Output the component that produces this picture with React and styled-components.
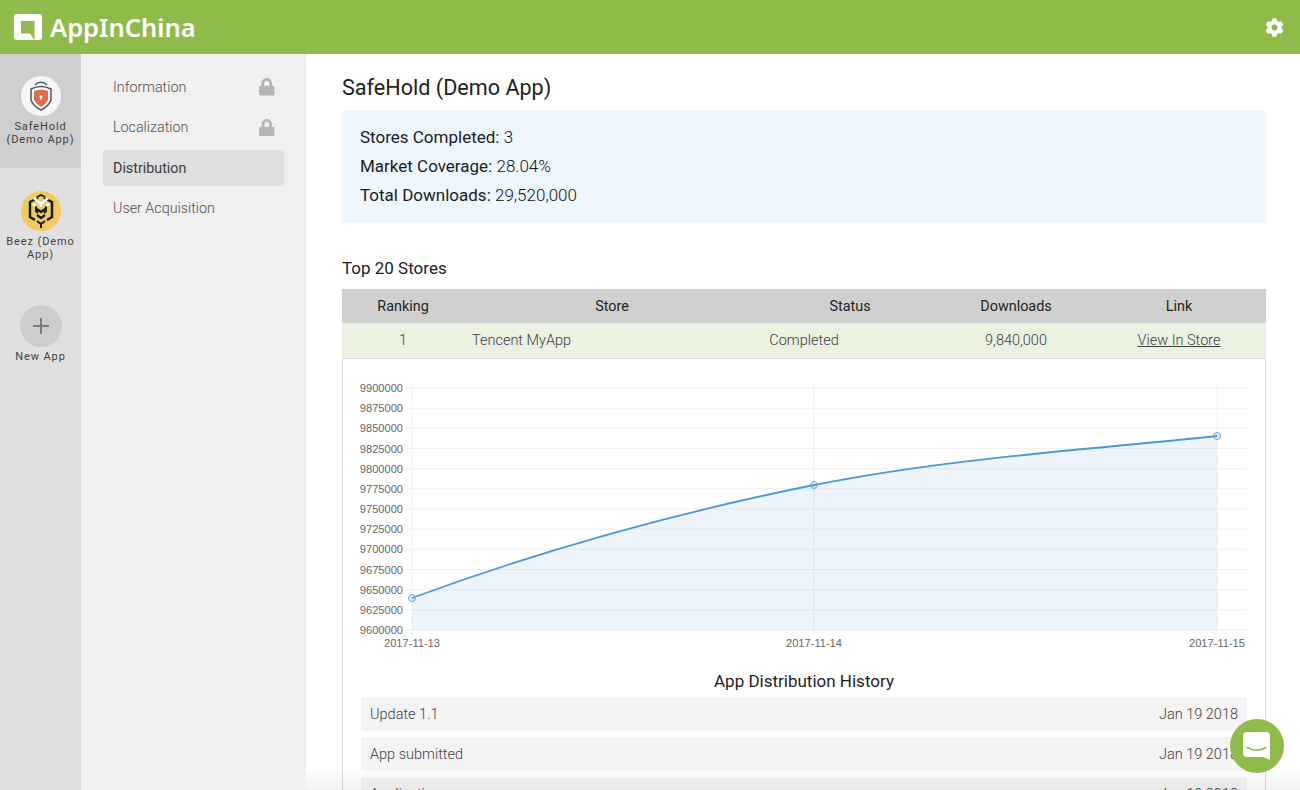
import React from 'react';
import styled, { createGlobalStyle } from 'styled-components';
import { FaCog, FaLock } from 'react-icons/fa';

const GlobalStyle = createGlobalStyle`
    html, body {
        margin: 0;
        height: 100%;
        overflow: hidden;
        background: #ffffff;
        font-family: Roboto, "Liberation Sans", sans-serif;
    }
`;

const Page = styled.div`
    display: flex;
    flex-direction: column;
    height: 790px;
    overflow: hidden;
    position: relative;
`;

const Header = styled.header`
    flex: 0 0 54px;
    display: flex;
    align-items: center;
    justify-content: space-between;
    padding: 0 16px 0 14px;
    background-color: #8fbb4b;
    color: #ffffff;
`;

const Brand = styled.div`
    display: flex;
    align-items: center;
    gap: 8px;
`;

const BrandName = styled.span`
    font-family: "Noto Sans", sans-serif;
    font-weight: 600;
    font-size: 25.5px;
    line-height: 54px;
`;

const Body = styled.div`
    flex: 1;
    display: flex;
    min-height: 0;
`;

const Rail = styled.nav`
    flex: 0 0 81px;
    background-color: #e1dfdf;
    display: flex;
    flex-direction: column;
`;

const RailItem = styled.div`
    flex: 0 0 ${(p) => p.$height}px;
    padding-top: ${(p) => p.$top}px;
    box-sizing: border-box;
    background-color: ${(p) => (p.$active ? '#cfcfcf' : 'transparent')};
    display: flex;
    flex-direction: column;
    align-items: center;
`;

const AppCircle = styled.div`
    flex: 0 0 40px;
    width: 40px;
    border-radius: 50%;
    background-color: ${(p) => p.$bg};
    display: flex;
    align-items: center;
    justify-content: center;
`;

const AddCircle = styled.div`
    flex: 0 0 42px;
    width: 42px;
    border-radius: 50%;
    background-color: #cdcdcd;
    display: flex;
    align-items: center;
    justify-content: center;
`;

const RailLabel = styled.div`
    margin-top: ${(p) => p.$gap}px;
    width: 78px;
    font-size: 11px;
    line-height: 12.6px;
    letter-spacing: 0.9px;
    color: #3f3f3f;
    text-align: center;
`;

const SideNav = styled.nav`
    flex: 0 0 225px;
    box-sizing: border-box;
    background-color: #f0f0f0;
    padding: 15px 22px;
    display: flex;
    flex-direction: column;
    gap: 4.33px;
`;

const NavItem = styled.div`
    height: 36px;
    display: flex;
    align-items: center;
    justify-content: space-between;
    padding: 0 9px 0 10px;
    border-radius: 4px;
    font-size: 14.3px;
    font-weight: ${(p) => (p.$active ? 400 : 300)};
    color: ${(p) => (p.$active ? '#3a3a3a' : '#4f4f4f')};
    background-color: ${(p) => (p.$active ? '#e0dfdf' : 'transparent')};
    svg {
        color: #b4b4b4;
        font-size: 17.5px;
    }
`;

const Main = styled.main`
    flex: 1;
    min-width: 0;
    padding: 20px 34px 0 36px;
    overflow: hidden;
`;

const Title = styled.h1`
    margin: 0 0 8px;
    font-size: 21.6px;
    line-height: 28px;
    font-weight: 400;
    color: #222222;
`;

const InfoBox = styled.div`
    box-sizing: border-box;
    height: 113px;
    padding: 13px 18px;
    background-color: #eef6fe;
    border-radius: 2px;
`;

const InfoLine = styled.div`
    font-size: 17px;
    line-height: 29px;
    color: #1c1c1c;
    span {
        font-weight: 300;
        color: #111111;
    }
`;

const SectionTitle = styled.h2`
    margin: 35px 0 11px;
    font-size: 17px;
    line-height: 20px;
    font-weight: 400;
    color: #222222;
`;

const HeaderRow = styled.div`
    display: grid;
    grid-template-columns: 122px 296px 180px 152px 174px;
    height: 34px;
    align-items: center;
    background-color: #d0d0d0;
    font-size: 14.4px;
    color: #1f1f1f;
    text-align: center;
`;

const StoreRow = styled.div`
    display: grid;
    grid-template-columns: 122px 236px 208px 216px 110px 1fr;
    height: 36px;
    box-sizing: border-box;
    align-items: center;
    background-color: #ebf2e2;
    border-bottom: 1px solid #dcdcdc;
    font-size: 14.5px;
    font-weight: 300;
    color: #3c3c3c;
    text-align: center;
`;

const StoreName = styled.div`
    text-align: left;
    padding-left: 8px;
`;

const StoreLink = styled.a`
    color: #3c3c3c;
    text-decoration: underline;
    white-space: nowrap;
`;

const Panel = styled.section`
    border: 1px solid #d8d8d8;
    border-top: none;
    padding: 0 18px;
`;

const ChartSvg = styled.svg`
    display: block;
    margin: 0 -18px;
    width: 922px;
    height: 300px;
    font-family: "Liberation Sans", sans-serif;
    font-size: 11.1px;
`;

const HistoryTitle = styled.h3`
    margin: 12px 0 6px;
    font-size: 17px;
    line-height: 20px;
    font-weight: 400;
    color: #1f1f1f;
    text-align: center;
`;

const HistoryRow = styled.div`
    display: flex;
    justify-content: space-between;
    align-items: center;
    height: 34px;
    margin-bottom: 6px;
    padding: 0 9px;
    border-radius: 2px;
    background-color: #f4f4f4;
    font-size: 14.5px;
    font-weight: 300;
    color: #3f3f3f;
`;

const BottomFade = styled.div`
    position: absolute;
    left: 306px;
    right: 0;
    bottom: 0;
    height: 22px;
    background: linear-gradient(rgba(0, 0, 0, 0), rgba(0, 0, 0, 0.05));
    pointer-events: none;
`;

const ChatBubble = styled.div`
    position: absolute;
    left: 1230px;
    top: 719px;
    width: 54px;
    height: 54px;
    border-radius: 50%;
    background-color: #8fbb4b;
    display: flex;
    align-items: center;
    justify-content: center;
`;

const yTicks = [
    9900000, 9875000, 9850000, 9825000, 9800000, 9775000, 9750000,
    9725000, 9700000, 9675000, 9650000, 9625000, 9600000,
];
const xTicks = [
    { x: 412, label: '2017-11-13' },
    { x: 814, label: '2017-11-14' },
    { x: 1217, label: '2017-11-15' },
];
const points = [[412, 598], [814, 485], [1217, 436]];
const curve = 'M412 598 C545 549 680 512 814 485 C950 458 1085 450 1217 436';

const history = [
    { name: 'Update 1.1', date: 'Jan 19 2018' },
    { name: 'App submitted', date: 'Jan 19 2018' },
    { name: 'Application', date: 'Jan 19 2018' },
];

const Logo = () => (
    <svg width="28" height="26" viewBox="0 0 28 26">
        <path
            fill="#ffffff"
            fillRule="evenodd"
            d="M3 0H25a3 3 0 0 1 3 3V23a3 3 0 0 1-3 3H20.5L16 19.5H7V7H20.5V26H3a3 3 0 0 1-3-3V3a3 3 0 0 1 3-3Z"
        />
    </svg>
);

const ShieldIcon = () => (
    <svg width="30" height="34" viewBox="0 0 30 34">
        <path d="M9 6a8 8 0 0 1 12 0" fill="none" stroke="#4d5766" strokeWidth="1.5" />
        <path d="M5 10q10-5 20 0v11q-2 6-10 10q-8-4-10-10Z" fill="#ffffff" stroke="#4d5766" strokeWidth="1.5" />
        <path d="M8 12q7-3 14 0v9q-2 4-7 7q-5-3-7-7Z" fill="#e36d4a" />
        <circle cx="15" cy="18" r="1.4" fill="#ffffff" />
        <rect x="14.4" y="18" width="1.2" height="3" fill="#ffffff" />
    </svg>
);

const BeeIcon = () => (
    <svg width="30" height="36" viewBox="0 0 30 36">
        <path d="M12 5L4 9V24L9 27M18 5L26 9V24L21 27" fill="none" stroke="#1b1b1b" strokeWidth="2.4" />
        <path d="M11 4l4-2 4 2" fill="none" stroke="#1b1b1b" strokeWidth="1.8" />
        <path d="M10 13v5l2 2M20 13v5l-2 2" fill="none" stroke="#1b1b1b" strokeWidth="2" />
        <path d="M11 16l4 3 4-3M11 22l4 3 4-3" fill="none" stroke="#1b1b1b" strokeWidth="2.2" />
        <path d="M11 28l4 3 4-3M15 31v4" fill="none" stroke="#1b1b1b" strokeWidth="2" />
        <path d="M8 5l7 6 7-6M15 11v3M7 11l3 2M23 11l-3 2" fill="none" stroke="#ffffff" strokeWidth="2.6" />
    </svg>
);

const PlusIcon = () => (
    <svg width="18" height="18" viewBox="0 0 18 18">
        <path d="M9 1V17M1 9H17" stroke="#7b7b7b" strokeWidth="2" />
    </svg>
);

const ChatIcon = () => (
    <svg width="28" height="29" viewBox="0 0 28 29">
        <path
            fill="#ffffff"
            d="M4 0H23a4 4 0 0 1 4 4V28L20 25H4a4 4 0 0 1-4-4V4a4 4 0 0 1 4-4Z"
        />
        <path d="M4 15.5Q13.5 21 23 15.5" fill="none" stroke="#8fbb4b" strokeWidth="1.6" strokeLinecap="round" />
    </svg>
);

const DownloadsChart = () => (
    <ChartSvg viewBox="343 359 922 300">
        {yTicks.map((tick, i) => {
            const y = 388 + i * 20.17;
            return (
                <g key={tick}>
                    <line x1="406" x2="1247" y1={y} y2={y} stroke="#f0f0f0" />
                    <text x="403" y={y + 4} textAnchor="end" fill="#666666">{tick}</text>
                </g>
            );
        })}
        {xTicks.map((tick) => (
            <g key={tick.label}>
                <line x1={tick.x} x2={tick.x} y1="384" y2="636" stroke="#f0f0f0" />
                <text x={tick.x} y="647" textAnchor="middle" fill="#666666">{tick.label}</text>
            </g>
        ))}
        <path d={`${curve} L1217 630 L412 630 Z`} fill="#4a90d9" fillOpacity="0.1" />
        <path d={curve} fill="none" stroke="#4b9ad4" strokeWidth="1.8" />
        {points.map(([x, y]) => (
            <circle key={x} cx={x} cy={y} r="3.5" fill="#4a90d9" fillOpacity="0.15" stroke="#6aaade" strokeWidth="1" />
        ))}
    </ChartSvg>
);

const App = () => {
    return (
        <Page>
            <GlobalStyle />
            <Header>
                <Brand>
                    <Logo />
                    <BrandName>AppInChina</BrandName>
                </Brand>
                <FaCog size={19} color="#ffffff" />
            </Header>
            <Body>
                <Rail>
                    <RailItem $active $height={114} $top={22}>
                        <AppCircle $bg="#f6f6f6"><ShieldIcon /></AppCircle>
                        <RailLabel $gap={5}>SafeHold (Demo App)</RailLabel>
                    </RailItem>
                    <RailItem $height={123} $top={23}>
                        <AppCircle $bg="#efcb62"><BeeIcon /></AppCircle>
                        <RailLabel $gap={5}>Beez (Demo App)</RailLabel>
                    </RailItem>
                    <RailItem $height={90} $top={14}>
                        <AddCircle><PlusIcon /></AddCircle>
                        <RailLabel $gap={4}>New App</RailLabel>
                    </RailItem>
                </Rail>
                <SideNav>
                    <NavItem>Information <FaLock /></NavItem>
                    <NavItem>Localization <FaLock /></NavItem>
                    <NavItem $active>Distribution</NavItem>
                    <NavItem>User Acquisition</NavItem>
                </SideNav>
                <Main>
                    <Title>SafeHold (Demo App)</Title>
                    <InfoBox>
                        <InfoLine>Stores Completed: <span>3</span></InfoLine>
                        <InfoLine>Market Coverage: <span>28.04%</span></InfoLine>
                        <InfoLine>Total Downloads: <span>29,520,000</span></InfoLine>
                    </InfoBox>
                    <SectionTitle>Top 20 Stores</SectionTitle>
                    <HeaderRow>
                        <div>Ranking</div>
                        <div>Store</div>
                        <div>Status</div>
                        <div>Downloads</div>
                        <div>Link</div>
                    </HeaderRow>
                    <StoreRow>
                        <div>1</div>
                        <StoreName>Tencent MyApp</StoreName>
                        <div>Completed</div>
                        <div>9,840,000</div>
                        <div><StoreLink href="#">View In Store</StoreLink></div>
                    </StoreRow>
                    <Panel>
                        <DownloadsChart />
                        <HistoryTitle>App Distribution History</HistoryTitle>
                        {history.map((item) => (
                            <HistoryRow key={item.name}>
                                <span>{item.name}</span>
                                <span>{item.date}</span>
                            </HistoryRow>
                        ))}
                    </Panel>
                </Main>
            </Body>
            <BottomFade />
            <ChatBubble><ChatIcon /></ChatBubble>
        </Page>
    );
};

export default App;
